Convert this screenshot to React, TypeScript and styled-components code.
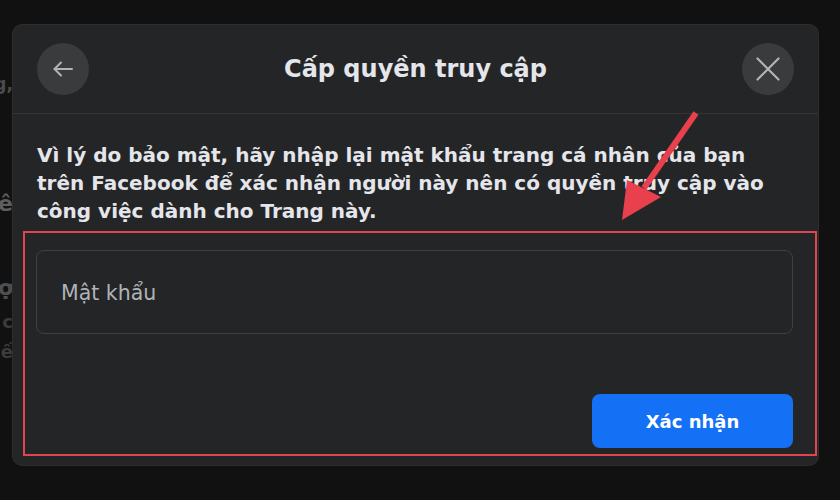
import * as React from 'react';
import styled, { createGlobalStyle } from 'styled-components';

const GlobalStyle = createGlobalStyle`
  html, body {
    margin: 0;
    padding: 0;
    background: #111112;
  }
  body {
    font-family: "DejaVu Sans", "Noto Sans", sans-serif;
    color: #e4e6eb;
  }
`;

const Page = styled.div`
  width: 840px;
  height: 500px;
  display: flex;
  align-items: flex-start;
  overflow: hidden;
  position: relative;
`;

const Sliver = styled.div`
  width: 13px;
  height: 500px;
  overflow: hidden;
  display: flex;
  flex-direction: column;
  align-items: flex-end;
  padding-top: 72px;
  box-sizing: border-box;
`;

const SliverLine = styled.div<{ $gap: number; $tone: string; $size: number }>`
  margin-top: ${(p) => p.$gap}px;
  font-size: ${(p) => p.$size}px;
  line-height: 24px;
  color: ${(p) => p.$tone};
  white-space: nowrap;
  font-weight: 600;
`;

const Dialog = styled.div`
  margin-top: 25px;
  width: 805px;
  height: 440px;
  background: #242526;
  border-radius: 9px;
  box-shadow: 0 0 0 1px #2c2d2e;
  display: flex;
  flex-direction: column;
`;

const Header = styled.div`
  height: 88px;
  flex-shrink: 0;
  padding: 0 24px;
  display: flex;
  align-items: center;
  justify-content: space-between;
  border-bottom: 1px solid #333435;
`;

const RoundButton = styled.button`
  width: 52px;
  height: 52px;
  border-radius: 50%;
  border: none;
  background: #3a3b3c;
  display: flex;
  align-items: center;
  justify-content: center;
  padding: 0;
  color: #b0b3b8;
`;

const Title = styled.h2`
  margin: 0;
  font-size: 24px;
  font-weight: 700;
  color: #e4e6eb;
`;

const Message = styled.p`
  margin: 27px 24px 0 24px;
  font-size: 20px;
  line-height: 28px;
  font-weight: 700;
  color: #e4e6eb;
`;

const FormArea = styled.div`
  margin: 6px 1px 0 10px;
  height: 225px;
  box-sizing: border-box;
  border: 2.5px solid #e0454f;
  padding: 17px 22px 6px 11px;
  display: flex;
  flex-direction: column;
  justify-content: space-between;
`;

const Field = styled.div`
  height: 84px;
  box-sizing: border-box;
  border: 1px solid #3e4042;
  border-radius: 8px;
  display: flex;
  align-items: center;
  padding-left: 24px;
`;

const Placeholder = styled.span`
  font-size: 20.5px;
  font-weight: 400;
  color: #b0b3b8;
  margin-top: 2px;
`;

const Actions = styled.div`
  display: flex;
  justify-content: flex-end;
`;

const PrimaryButton = styled.button`
  width: 201px;
  height: 54px;
  border: none;
  border-radius: 8px;
  background: #1470f5;
  color: #ffffff;
  font-family: inherit;
  font-size: 18px;
  font-weight: 700;
`;

const Annotation = styled.svg`
  position: absolute;
  left: 0;
  top: 0;
  pointer-events: none;
`;

const BackIcon = () => (
  <svg width="24" height="24" viewBox="0 0 24 24" fill="none" stroke="currentColor" strokeWidth="2" strokeLinecap="round" strokeLinejoin="round">
    <path d="M21 12H3.5" />
    <path d="M10 5.5 3.5 12l6.5 6.5" />
  </svg>
);

const CloseIcon = () => (
  <svg width="26" height="26" viewBox="0 0 26 26" fill="none" stroke="currentColor" strokeWidth="2.2" strokeLinecap="round">
    <path d="M2.5 2.5 23.5 23.5" />
    <path d="M23.5 2.5 2.5 23.5" />
  </svg>
);

export default function App() {
  return (
    <Page>
      <GlobalStyle />
      <Sliver>
        <SliverLine $gap={0} $tone="#4a4b4c" $size={17}>ng,</SliverLine>
        <SliverLine $gap={96} $tone="#5d5e60" $size={22}>lê</SliverLine>
        <SliverLine $gap={60} $tone="#4e4f51" $size={22}>hợ</SliverLine>
        <SliverLine $gap={10} $tone="#3a3b3c" $size={18}>ı c</SliverLine>
        <SliverLine $gap={6} $tone="#3a3b3c" $size={18}>iế</SliverLine>
      </Sliver>
      <Dialog>
        <Header>
          <RoundButton aria-label="Quay lại">
            <BackIcon />
          </RoundButton>
          <Title>Cấp quyền truy cập</Title>
          <RoundButton aria-label="Đóng">
            <CloseIcon />
          </RoundButton>
        </Header>
        <Message>
          Vì lý do bảo mật, hãy nhập lại mật khẩu trang cá nhân của bạn
          <br />
          trên Facebook để xác nhận người này nên có quyền truy cập vào
          <br />
          công việc dành cho Trang này.
        </Message>
        <FormArea>
          <Field>
            <Placeholder>Mật khẩu</Placeholder>
          </Field>
          <Actions>
            <PrimaryButton>Xác nhận</PrimaryButton>
          </Actions>
        </FormArea>
      </Dialog>
      <Annotation width="840" height="500" viewBox="0 0 840 500">
        <path d="M696 113 L644 188" stroke="#e8404c" strokeWidth="6" strokeLinecap="butt" />
        <path d="M622 220 L627 180 L661 197 Z" fill="#e8404c" />
      </Annotation>
    </Page>
  );
}
